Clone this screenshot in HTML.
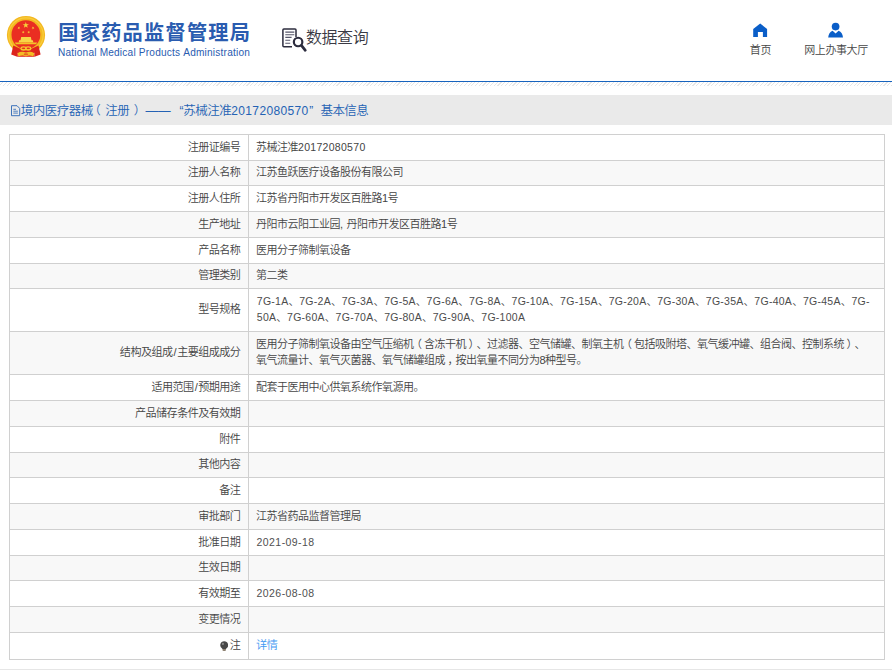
<!DOCTYPE html>
<html lang="zh-CN">
<head>
<meta charset="utf-8">
<title>国家药品监督管理局 数据查询</title>
<style>
html,body{margin:0;padding:0;}
body{width:892px;height:671px;position:relative;overflow:hidden;background:#fff;
 font-family:"Liberation Sans","Noto Sans CJK SC",sans-serif;color:#444;text-spacing-trim:space-all;font-kerning:none;}
.abs{position:absolute;white-space:nowrap;}
#title{left:58.3px;top:15.8px;font-size:20.2px;font-weight:bold;color:#2a5cb0;line-height:34px;letter-spacing:1.25px;}
#sub{left:58px;top:47.2px;font-size:10.1px;color:#2a5cb0;line-height:12px;letter-spacing:0.2px;}
#sj{left:306px;top:25.5px;font-size:16px;color:#3a3a44;line-height:24px;letter-spacing:-0.45px;font-weight:350;}
.nav{font-weight:350;font-size:11px;letter-spacing:-0.4px;color:#444;line-height:14px;margin-top:-0.5px;text-align:center;}
#blue{left:0;top:80.7px;width:892px;height:1.5px;background:#1763be;}
#stripe{left:0;top:82.2px;width:892px;height:4px;
 background:repeating-linear-gradient(135deg,#fff 0,#fff 1.8px,#e6e6e6 1.8px,#e6e6e6 2.65px);}
#bar{left:0;top:95px;width:892px;height:29.5px;background:#eaeaea;}
#bartxt{left:0;top:101px;font-weight:350;font-size:12px;line-height:20px;color:#2462b4;width:500px;height:20px;}
#bartxt .s{position:absolute;top:0;white-space:nowrap;}
#bartxt .c{font-size:12.5px;letter-spacing:-0.5px;margin-left:-0.2px;}
.row{position:absolute;left:9px;width:876px;box-sizing:border-box;border-top:1px solid #d0d0d0;border-left:1px solid #d0d0d0;border-right:1px solid #d0d0d0;font-size:11px;letter-spacing:-0.5px;line-height:15.8px;font-weight:350;}
.row.g{background:#f8f8f8;}
.row .l{position:absolute;left:0;top:0;bottom:0;width:239px;border-right:1px solid #d0d0d0;box-sizing:border-box;text-align:right;padding-right:7.6px;font-size:11.1px;letter-spacing:-0.55px;display:flex;align-items:center;justify-content:flex-end;white-space:nowrap;}
.row .v{position:absolute;left:239px;right:0;top:0;bottom:0;padding-left:7px;display:flex;align-items:center;}
.sl{margin:0 1px;}
.lat{color:#4c4c4c;font-size:10.5px;letter-spacing:0.268px;padding-left:0.8px;}
.dt{color:#505050;font-size:10.5px;letter-spacing:0.42px;padding-left:0.6px;}
.pl{position:relative;left:-2.6px;}
.pr{position:relative;left:2.6px;}
.d{font-size:10.5px;letter-spacing:0.3px;}
a{color:#4398f2;font-size:11.2px;text-decoration:none;}
</style>
</head>
<body>
<svg class="abs" style="left:0px;top:10px" width="52" height="52" viewBox="0 10 52 52">
 <circle cx="26" cy="35" r="19.1" fill="#f4b820"/>
 <circle cx="26" cy="35" r="17.2" fill="none" stroke="#f9d54a" stroke-width="1.200" opacity="0.700"/>
 <circle cx="25.900" cy="34.700" r="14.400" fill="#ea2e22"/>
 <polygon points="25.80,21.90 26.58,24.13 28.94,24.18 27.06,25.61 27.74,27.87 25.80,26.52 23.86,27.87 24.54,25.61 22.66,24.18 25.02,24.13" fill="#f6d23a"/>
 <polygon points="19.65,26.60 19.45,27.66 20.37,28.21 19.30,28.35 19.06,29.39 18.60,28.42 17.53,28.51 18.31,27.78 17.90,26.79 18.84,27.30" fill="#f6d23a"/>
 <polygon points="32.25,26.60 33.06,27.30 34.00,26.79 33.59,27.78 34.37,28.51 33.30,28.42 32.84,29.39 32.60,28.35 31.53,28.21 32.45,27.66" fill="#f6d23a"/>
 <polygon points="23.59,30.75 23.67,31.82 24.70,32.12 23.70,32.53 23.74,33.60 23.04,32.78 22.03,33.14 22.60,32.23 21.94,31.38 22.98,31.64" fill="#f6d23a"/>
 <polygon points="28.31,30.75 28.92,31.64 29.96,31.38 29.30,32.23 29.87,33.14 28.86,32.78 28.16,33.60 28.20,32.53 27.20,32.12 28.23,31.82" fill="#f6d23a"/>
 <path d="M21.200 37h9.600l0.700 3.300h1.300l0.600 2.100h-14.800l0.600 -2.100h1.300z" fill="#f8d648"/>
 <path d="M14.800 42.400h22.400l-1.200 1.900h-20z" fill="#f5c028"/>
 <path d="M13.300 45.400L21.400 49.200L22 52L17.200 52.800V56.800L11.200 54.600Z" fill="#dc241c"/>
 <path d="M38.500 45.400L30.400 49.200L29.800 52L34.600 52.800V56.800L40.600 54.600Z" fill="#dc241c"/>
 <path d="M17.200 50H34.600V56.800H17.200Z" fill="#e0281e"/>
 <ellipse cx="23.600" cy="48.600" rx="2.600" ry="1.700" fill="none" stroke="#f6c830" stroke-width="1.100"/>
 <ellipse cx="28.200" cy="48.600" rx="2.600" ry="1.700" fill="none" stroke="#f6c830" stroke-width="1.100"/>
 <path d="M17.500 53.200Q21.500 50.800 25.900 52.600Q30.300 50.800 34.300 53.200L33.300 56.500Q29.500 54.600 25.900 56.400Q22.300 54.600 18.500 56.500Z" fill="#f4bc24"/>
 <ellipse cx="25.900" cy="54.300" rx="2.300" ry="1" fill="#e0281e" opacity="0.600"/>
</svg>
<div class="abs" id="title">国家药品监督管理局</div>
<div class="abs" id="sub">National Medical Products Administration</div>

<svg class="abs" style="left:276px;top:20px" width="36" height="36" viewBox="276 20 36 36" fill="none" stroke="#2c2c3e">
 <path d="M296 37V30.100Q296 29.100 295 29.100H283.900Q282.900 29.100 282.900 30.100V45.800Q282.900 46.800 283.900 46.800H292" stroke-width="1.500"/>
 <path d="M285.300 32.100H294.300M285.300 34.700H294.300M285.300 37.400H291.600M285.300 40.200H290.200M285.300 43.300H290.200" stroke-width="1.100" stroke="#55556a"/>
 <circle cx="298.100" cy="42" r="4.250" stroke-width="2.200" fill="#fff"/>
 <path d="M301.800 45.800L305.300 50.300" stroke-width="2.700" stroke-linecap="round"/>
</svg>
<div class="abs" id="sj">数据查询</div>

<svg class="abs" style="left:745px;top:18px" width="30" height="24" viewBox="745 18 30 24"><path d="M760.200 23.500L767.100 28.900V36.900H762.900V31.900H757.900V36.900H753.200V28.900Z" fill="#0a5ec8"/></svg>
<div class="abs nav" style="left:730.400px;width:60px;top:43px">首页</div>
<svg class="abs" style="left:820px;top:18px" width="30" height="24" viewBox="820 18 30 24"><circle cx="835.600" cy="26.600" r="3.850" fill="#0a5ec8"/><path d="M828.200 37.500Q828.600 32.200 832.600 30.700L835.600 33.400L838.600 30.700Q842.600 32.200 843 37.500Z" fill="#0a5ec8"/></svg>
<div class="abs nav" style="left:796px;width:80px;top:43px">网上办事大厅</div>

<div class="abs" id="blue"></div>
<div class="abs" id="stripe"></div>
<div class="abs" id="bar"></div>
<svg class="abs" style="left:10.500px;top:105px" width="10" height="12" viewBox="0 0 10 12" fill="none" stroke="#2a66b6" stroke-width="0.900"><path d="M0.500 0.700H6L8.700 3.400V10.700H0.500Z"/><path d="M2.300 4.300H5M2.300 6.200H6.900M2.300 8.100H6.900" stroke-width="0.800"/></svg>
<div class="abs" id="bartxt"><span class="s c" style="left:21px">境内医疗器械</span><span class="s" style="left:88.800px">（</span><span class="s c" style="left:105.400px">注册</span><span class="s" style="left:133.800px">）</span><span class="s" style="left:145.400px;font-size:12.600px">——</span><span class="s" style="left:179.500px">“</span><span class="s c" style="left:183.500px">苏械注准</span><span class="s" style="left:231.300px;letter-spacing:0.350px">20172080570</span><span class="s" style="left:309.200px">”</span><span class="s c" style="left:320.800px;letter-spacing:-0.620px">基本信息</span></div>

<div class="row" style="top:134px;height:26px"><div class="l">注册证编号</div><div class="v"><span>苏械注准<span class="d">20172080570</span></span></div></div>
<div class="row g" style="top:160px;height:25px"><div class="l">注册人名称</div><div class="v">江苏鱼跃医疗设备股份有限公司</div></div>
<div class="row" style="top:185px;height:26px"><div class="l">注册人住所</div><div class="v">江苏省丹阳市开发区百胜路1号</div></div>
<div class="row g" style="top:211px;height:26px"><div class="l">生产地址</div><div class="v"><span>丹阳市云阳工业园<span style="letter-spacing:0.2px">, </span>丹阳市开发区百胜路1号</span></div></div>
<div class="row" style="top:237px;height:26px"><div class="l">产品名称</div><div class="v">医用分子筛制氧设备</div></div>
<div class="row g" style="top:263px;height:25px"><div class="l">管理类别</div><div class="v">第二类</div></div>
<div class="row" style="top:288px;height:43px"><div class="l">型号规格</div><div class="v"><span class="lat">7G-1A、7G-2A、7G-3A、7G-5A、7G-6A、7G-8A、7G-10A、7G-15A、7G-20A、7G-30A、7G-35A、7G-40A、7G-45A、7G-<br>50A、7G-60A、7G-70A、7G-80A、7G-90A、7G-100A</span></div></div>
<div class="row g" style="top:331px;height:43px"><div class="l">结构及组成<span class="sl">/</span>主要组成成分</div><div class="v"><span>医用分子筛制氧设备由空气压缩机<span class="pl">（</span>含冻干机<span class="pr">）</span>、过滤器、空气储罐、制氧主机<span class="pl">（</span>包括吸附塔、氧气缓冲罐、组合阀、控制系统<span class="pr">）</span>、<br>氧气流量计、氧气灭菌器、氧气储罐组成<span class="pr">，</span>按出氧量不同分为8种型号。</span></div></div>
<div class="row" style="top:374px;height:26px"><div class="l">适用范围<span class="sl">/</span>预期用途</div><div class="v">配套于医用中心供氧系统作氧源用。</div></div>
<div class="row g" style="top:400px;height:26px"><div class="l">产品储存条件及有效期</div><div class="v"></div></div>
<div class="row" style="top:426px;height:26px"><div class="l">附件</div><div class="v"></div></div>
<div class="row g" style="top:452px;height:25px"><div class="l">其他内容</div><div class="v"></div></div>
<div class="row" style="top:477px;height:26px"><div class="l">备注</div><div class="v"></div></div>
<div class="row g" style="top:503px;height:26px"><div class="l">审批部门</div><div class="v">江苏省药品监督管理局</div></div>
<div class="row" style="top:529px;height:26px"><div class="l">批准日期</div><div class="v"><span class="dt">2021-09-18</span></div></div>
<div class="row g" style="top:555px;height:25px"><div class="l">生效日期</div><div class="v"></div></div>
<div class="row" style="top:580px;height:26px"><div class="l">有效期至</div><div class="v"><span class="dt">2026-08-08</span></div></div>
<div class="row g" style="top:606px;height:26px"><div class="l">变更情况</div><div class="v"></div></div>
<div class="row" style="top:632px;height:27.700px;border-bottom:1px solid #d0d0d0"><div class="l"><svg width="8.500" height="10.500" viewBox="0 0 8.500 10.500" style="margin-right:1.600px;margin-top:0.500px"><path d="M4.200 0.200A3.900 3.900 0 0 1 6.300 7.400L6 8H2.400L2.100 7.400A3.900 3.900 0 0 1 4.200 0.200Z" fill="#484848"/><path d="M2.500 8h3.400v1.600q-1.700 1 -3.400 0z" fill="#8d8070"/><circle cx="2.900" cy="2.900" r="1.100" fill="#8a8a8a"/></svg>注</div><div class="v"><a>详情</a></div></div>
<div class="abs" style="left:0;top:669px;width:892px;height:1px;background:#e6e6e6"></div>
</body>
</html>
